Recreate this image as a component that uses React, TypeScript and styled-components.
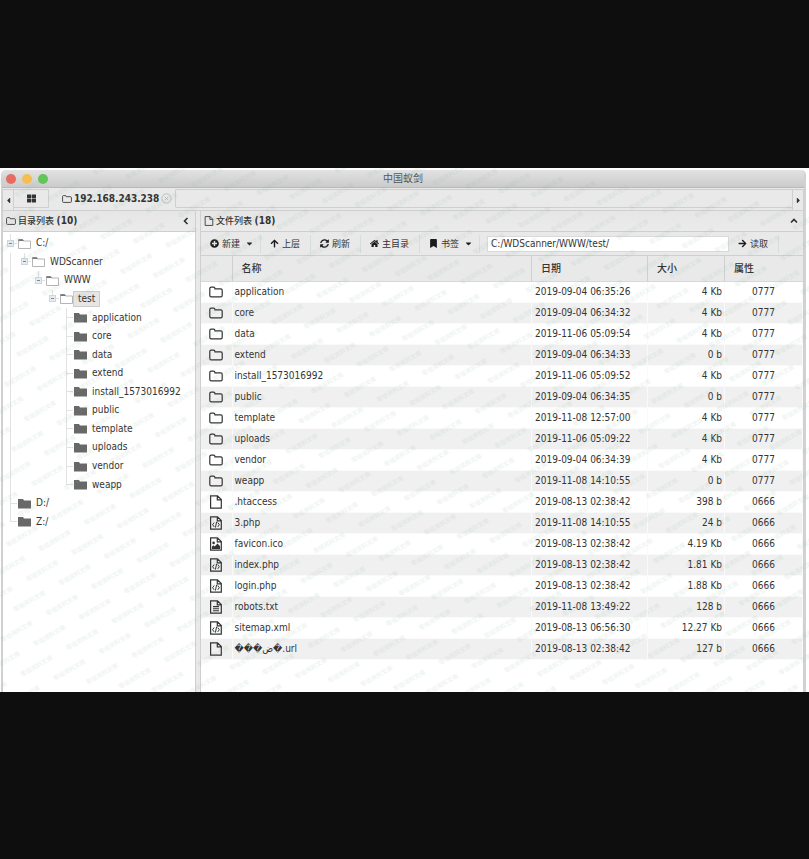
import React from 'react';
import styled, { createGlobalStyle, css } from 'styled-components';
import {
  FaArrowRight,
  FaArrowUp,
  FaBookmark,
  FaCaretDown,
  FaCaretLeft,
  FaCaretRight,
  FaHome,
  FaPlusCircle,
  FaSyncAlt,
  FaThLarge,
} from 'react-icons/fa';

const line = '#cfcfcf';
const chrome = '#e9e9e9';
const ink = '#333333';

const GlobalStyle = createGlobalStyle`
  * { box-sizing: border-box; }
  body {
    margin: 0;
    background: #0e0e0e;
    color: ${ink};
    font: 10px/14px "DejaVu Sans Condensed", "Noto Sans CJK SC", sans-serif;
  }
  button, input { font: inherit; color: inherit; }
  button { background: none; border: 0; padding: 0; }
  svg { display: block; flex: none; }
`;

const Page = styled.div`
  min-height: 100vh;
  padding: 168px 0;
`;

const Sheet = styled.div`
  position: relative;
  overflow: hidden;
  background: #fff;
  padding: 2px 3px 0 1px;
`;

const Frame = styled.div`
  display: flex;
  flex-direction: column;
  border: solid #d2d2d2;
  border-width: 0 2px 0 1px;
  border-radius: 5px 5px 0 0;
  background: ${chrome};
`;

const TitleBar = styled.header`
  display: grid;
  grid-template-columns: 1fr auto 1fr;
  align-items: center;
  height: 18px;
  padding: 0 4px;
  background: linear-gradient(#e2e2e2, #cbcbcb);
  border-bottom: 1px solid #b9b9b9;
  border-radius: 5px 5px 0 0;
`;

const Lights = styled.div`
  display: flex;
  gap: 6px;
`;

const Light = styled.button<{ $color: string }>`
  width: 10px;
  height: 10px;
  border-radius: 50%;
  background: ${p => p.$color};
`;

const Title = styled.h1`
  margin: 0;
  font-size: 10px;
  font-weight: 400;
  color: #555555;
`;

const TabBar = styled.nav`
  display: flex;
  height: 23px;
  padding-top: 1px;
  border-bottom: 1px solid ${line};
`;

const Scroll = styled.button`
  display: flex;
  align-items: center;
  justify-content: center;
  width: 12px;
  border: solid ${line};
  border-width: 1px 1px 0;
`;

const Tab = styled.div<{ $active?: boolean }>`
  display: flex;
  align-items: center;
  margin-bottom: 2px;
  border-top: 1px solid ${p => (p.$active ? chrome : line)};
  border-bottom: 1px solid ${p => (p.$active ? chrome : line)};
  border-right: 1px solid ${line};
  font-weight: 700;
  padding: 0 3px 0 13px;
  gap: 2px;
`;

const HomeTab = styled(Tab)`
  padding: 0 12px 0 13px;
`;

const TabLabel = styled.button`
  font-weight: 700;
`;

const Close = styled.button`
  color: #bdbdbd;
`;

const TabFill = styled.div`
  flex: 1;
  margin-bottom: 2px;
  border: solid ${line};
  border-width: 1px 0;
`;

const Panels = styled.main`
  display: grid;
  grid-template-columns: 194px minmax(0, 1fr);
  column-gap: 4px;
`;

const Panel = styled.section`
  display: flex;
  flex-direction: column;
  border: solid ${line};
  border-width: 0 1px;
  background: #fff;
`;

const PanelHead = styled.header`
  display: flex;
  align-items: center;
  gap: 2px;
  height: 21px;
  padding: 0 5px 0 3px;
  background: linear-gradient(#e6e6e6, #ebebeb);
  border-bottom: 1px solid ${line};
`;

const PanelTitle = styled.h2`
  flex: 1;
  margin: 0;
  font-size: 9px;
  font-weight: 500;
`;

const Count = styled.span`
  font-size: 10px;
  font-weight: 700;
`;

const Tree = styled.ul`
  display: grid;
  grid-auto-rows: 1fr;
  height: 297px;
  margin: 2px 0 0;
  padding: 0;
  list-style: none;
`;

const Node = styled.li`
  display: flex;
  align-items: stretch;
`;

type GuideKind = 'none' | 'through' | 'leaf' | 'last' | 'open';

const Guide = styled.span<{ $kind: GuideKind }>`
  display: flex;
  align-items: center;
  justify-content: center;
  width: 14px;
  ${p =>
    p.$kind === 'through' &&
    css`background: linear-gradient(#e2e2e2, #e2e2e2) 7px 0 / 1px 100% no-repeat;`}
  ${p =>
    p.$kind === 'leaf' &&
    css`background:
      linear-gradient(#e2e2e2, #e2e2e2) 7px 0 / 1px 100% no-repeat,
      linear-gradient(#e2e2e2, #e2e2e2) 100% 50% / 7px 1px no-repeat;`}
  ${p =>
    (p.$kind === 'last' || p.$kind === 'open') &&
    css`background:
      linear-gradient(#e2e2e2, #e2e2e2) 7px 0 / 1px 50% no-repeat,
      linear-gradient(#e2e2e2, #e2e2e2) 100% 50% / 7px 1px no-repeat;`}
`;

const Toggle = styled.button`
  display: flex;
  align-items: center;
  justify-content: center;
  width: 7px;
  height: 7px;
  border: 1px solid #cdd6de;
  background: #e6ecf2;

  &::after {
    content: '';
    width: 3px;
    height: 1px;
    background: #7d8790;
  }
`;

const NodeIcon = styled.span`
  display: flex;
  align-items: center;
  width: 14px;
  padding-left: 1px;
`;

const NodeLabel = styled.button<{ $selected?: boolean }>`
  align-self: center;
  height: 16px;
  line-height: 14px;
  padding: 0 4px;
  border: 1px solid ${p => (p.$selected ? '#cccccc' : 'transparent')};
  background: ${p => (p.$selected ? '#e6e6e6' : 'transparent')};
`;

const Toolbar = styled.div`
  display: flex;
  align-items: center;
  height: 24px;
  padding-right: 24px;
  background: ${chrome};
  border-bottom: 1px solid ${line};
`;

const Tool = styled.button<{ $menu?: boolean }>`
  display: flex;
  align-items: center;
  gap: 3px;
  height: 18px;
  padding: 0 ${p => (p.$menu ? 6 : 10)}px 0 9px;
  border-right: 1px solid #d6dde0;
  font-size: 9px;

  svg { color: #1c1c1c; }
`;

const Caret = styled(FaCaretDown)`
  margin-left: 2px;
`;

const PathInput = styled.input`
  flex: 1;
  min-width: 0;
  height: 16px;
  margin: 0 0 0 7px;
  padding: 0 3px;
  border: 1px solid #d9d9d9;
  background: #fff;
`;

const Files = styled.table`
  width: 100%;
  table-layout: fixed;
  border-collapse: collapse;
  margin-bottom: 32px;
`;

const HeadCell = styled.th<{ $width?: number }>`
  width: ${p => (p.$width ? `${p.$width}px` : 'auto')};
  height: 25px;
  padding: 2px 0 0 9px;
  text-align: left;
  font-weight: 500;
  background: ${chrome};
  border-right: 1px solid ${line};
  border-bottom: 1px solid #d8d8d8;

  &:last-child { border-right: 0; }
`;

const FileRow = styled.tr`
  &:nth-child(even) td { background: #f0f0f0; }
`;

const Cell = styled.td<{ $align?: 'left' | 'right' | 'center' }>`
  height: 21px;
  padding: 0 2px;
  text-align: ${p => p.$align ?? 'left'};
  border: solid #fafafa;
  border-width: 1px 1px 1px 0;
  white-space: nowrap;
`;

const DateCell = styled(Cell)`
  padding-left: 3px;
`;

const IconCell = styled(Cell)`
  padding-left: 8px;
`;

const WatermarkLayer = styled.svg`
  position: absolute;
  inset: 0;
  width: 100%;
  height: 100%;
  pointer-events: none;
  fill: #86b398;
  opacity: 0.13;
  font: 700 6px "Noto Sans CJK SC", sans-serif;
`;

const FolderOutline = ({ size = 14 }: { size?: number }) => (
  <svg width={size} height={size} viewBox="0 0 14 14" fill="none" stroke="currentColor" strokeWidth="1.2">
    <path d="M.8 3.6c0-.9.5-1.4 1.4-1.4h2.4c.8 0 1.3.5 1.3 1.3v.3h5.9c.9 0 1.4.5 1.4 1.4v5.2c0 .9-.5 1.4-1.4 1.4H2.2c-.9 0-1.4-.5-1.4-1.4z" />
  </svg>
);

const FileIcon = ({ kind, size = 14 }: { kind: string; size?: number }) => {
  if (kind === 'dir') return <FolderOutline size={size} />;
  return (
    <svg width={size} height={size} viewBox="0 0 14 14" fill="none" stroke="currentColor" strokeWidth="1.2">
      <path d="M1.6.8h6.9l3.8 3.8v8.6H1.6zM8.3.8v4h4" />
      {kind === 'code' && <path d="M5.2 6.5 3.6 8.7l1.6 2.2M8.7 6.5l1.6 2.2-1.6 2.2M7.6 5.8l-1.2 5.8" strokeWidth="1" />}
      {kind === 'text' && <path d="M4 6.6h6M4 8.7h6M4 10.8h6" strokeWidth="1.1" />}
      {kind === 'image' && (
        <g fill="currentColor" stroke="none">
          <circle cx="4.6" cy="5.9" r="1.3" />
          <path d="M2.9 12V9.8l1.6-1.5 1.2 1.1 2.8-2.9 2.6 2.7V12z" />
        </g>
      )}
    </svg>
  );
};

const TreeFolder = ({ open }: { open?: boolean }) =>
  open ? (
    <svg width="13" height="11" viewBox="0 0 13 11">
      <path d="M.5 10.5v-9h4l1 1.5h7v7.5z" fill="#fff" stroke="#b5b5b5" />
      <path d="M.5 3V1.3h4.2L6 3z" fill="#777" />
    </svg>
  ) : (
    <svg width="13" height="11" viewBox="0 0 13 11">
      <path d="M0 10.5V1h5l1 1.5h7v8z" fill="#686868" />
    </svg>
  );

const Chevron = ({ d }: { d: string }) => (
  <svg width="8" height="8" viewBox="0 0 8 8" fill="none" stroke="#2e2e2e" strokeWidth="1.6">
    <path d={d} />
  </svg>
);

type TreeNode = { name: string; guides: GuideKind[]; selected?: boolean };

const leaves = ['application', 'core', 'data', 'extend', 'install_1573016992', 'public', 'template', 'uploads', 'vendor', 'weapp'];

const tree: TreeNode[] = [
  { name: 'C:/', guides: ['open'] },
  { name: 'WDScanner', guides: ['through', 'open'] },
  { name: 'WWW', guides: ['through', 'none', 'open'] },
  { name: 'test', guides: ['through', 'none', 'none', 'open'], selected: true },
  ...leaves.map((name, i): TreeNode => ({
    name,
    guides: ['through', 'none', 'none', 'none', i === leaves.length - 1 ? 'last' : 'leaf'],
  })),
  { name: 'D:/', guides: ['leaf'] },
  { name: 'Z:/', guides: ['last'] },
];

const files: [string, string, string, string, string][] = [
  ['dir', 'application', '2019-09-04 06:35:26', '4 Kb', '0777'],
  ['dir', 'core', '2019-09-04 06:34:32', '4 Kb', '0777'],
  ['dir', 'data', '2019-11-06 05:09:54', '4 Kb', '0777'],
  ['dir', 'extend', '2019-09-04 06:34:33', '0 b', '0777'],
  ['dir', 'install_1573016992', '2019-11-06 05:09:52', '4 Kb', '0777'],
  ['dir', 'public', '2019-09-04 06:34:35', '0 b', '0777'],
  ['dir', 'template', '2019-11-08 12:57:00', '4 Kb', '0777'],
  ['dir', 'uploads', '2019-11-06 05:09:22', '4 Kb', '0777'],
  ['dir', 'vendor', '2019-09-04 06:34:39', '4 Kb', '0777'],
  ['dir', 'weapp', '2019-11-08 14:10:55', '0 b', '0777'],
  ['file', '.htaccess', '2019-08-13 02:38:42', '398 b', '0666'],
  ['code', '3.php', '2019-11-08 14:10:55', '24 b', '0666'],
  ['image', 'favicon.ico', '2019-08-13 02:38:42', '4.19 Kb', '0666'],
  ['code', 'index.php', '2019-08-13 02:38:42', '1.81 Kb', '0666'],
  ['code', 'login.php', '2019-08-13 02:38:42', '1.88 Kb', '0666'],
  ['text', 'robots.txt', '2019-11-08 13:49:22', '128 b', '0666'],
  ['code', 'sitemap.xml', '2019-08-13 06:56:30', '12.27 Kb', '0666'],
  ['file', '\uFFFD\uFFFD\uFFFD\u0636\uFFFD.url', '2019-08-13 02:38:42', '127 b', '0666'],
];

/* Slanted lattice of repeated marks laid over the whole window. */
const Watermark = () => {
  const marks: React.ReactNode[] = [];
  for (let row = -14; row <= 5; row++) {
    for (let col = -8; col <= 32; col++) {
      const x = 42 + col * 32.73 - row * 12.7;
      const y = 403 + col * 4.07 + row * 30.3;
      if (x < -12 || x > 820 || y < -6 || y > 530) continue;
      marks.push(
        <text key={`${row}:${col}`} transform={`translate(${x} ${y}) rotate(-30)`} textAnchor="middle" dy="2">
          零组资料文库
        </text>,
      );
    }
  }
  return <WatermarkLayer aria-hidden="true">{marks}</WatermarkLayer>;
};

export default function App() {
  return (
    <Page>
      <GlobalStyle />
      <Sheet>
        <Frame>
          <TitleBar>
            <Lights>
              <Light $color="#ec695f" aria-label="关闭" />
              <Light $color="#f4bf50" aria-label="最小化" />
              <Light $color="#62c655" aria-label="最大化" />
            </Lights>
            <Title>中国蚁剑</Title>
          </TitleBar>
          <TabBar>
            <Scroll aria-label="向左滚动"><FaCaretLeft size={9} /></Scroll>
            <HomeTab as="button" aria-label="主页"><FaThLarge size={9} /></HomeTab>
            <Tab $active>
              <FolderOutline size={10} />
              <TabLabel>192.168.243.238</TabLabel>
              <Close aria-label="关闭标签">
                <svg width="11" height="11" viewBox="0 0 11 11" fill="none" stroke="currentColor">
                  <circle cx="5.5" cy="5.5" r="4.7" />
                  <path d="m3.7 3.7 3.6 3.6m0-3.6L3.7 7.3" />
                </svg>
              </Close>
            </Tab>
            <TabFill />
            <Scroll aria-label="向右滚动"><FaCaretRight size={9} /></Scroll>
          </TabBar>
          <Panels>
            <Panel>
              <PanelHead>
                <FolderOutline size={10} />
                <PanelTitle>目录列表 <Count>(10)</Count></PanelTitle>
                <button aria-label="折叠目录"><Chevron d="M5.5 1 2.5 4l3 3" /></button>
              </PanelHead>
              <Tree>
                {tree.map(node => {
                  const own = node.guides[node.guides.length - 1];
                  return (
                    <Node key={node.name}>
                      {node.guides.map((kind, i) => (
                        <Guide key={i} $kind={kind}>
                          {kind === 'open' && <Toggle aria-label={`折叠 ${node.name}`} />}
                        </Guide>
                      ))}
                      <NodeIcon><TreeFolder open={own === 'open'} /></NodeIcon>
                      <NodeLabel $selected={node.selected}>{node.name}</NodeLabel>
                    </Node>
                  );
                })}
              </Tree>
            </Panel>
            <Panel>
              <PanelHead>
                <FileIcon kind="file" size={10} />
                <PanelTitle>文件列表 <Count>(18)</Count></PanelTitle>
                <button aria-label="折叠列表"><Chevron d="M1 5.5l3-3 3 3" /></button>
              </PanelHead>
              <Toolbar>
                <Tool $menu><FaPlusCircle size={9} />新建<Caret size={9} /></Tool>
                <Tool><FaArrowUp size={9} />上层</Tool>
                <Tool><FaSyncAlt size={9} />刷新</Tool>
                <Tool><FaHome size={9} />主目录</Tool>
                <Tool $menu><FaBookmark size={9} />书签<Caret size={9} /></Tool>
                <PathInput aria-label="路径" defaultValue="C:/WDScanner/WWW/test/" />
                <Tool><FaArrowRight size={9} />读取</Tool>
              </Toolbar>
              <Files>
                <thead>
                  <tr>
                    <HeadCell $width={31} aria-label="类型" />
                    <HeadCell>名称</HeadCell>
                    <HeadCell $width={116}>日期</HeadCell>
                    <HeadCell $width={77}>大小</HeadCell>
                    <HeadCell $width={78}>属性</HeadCell>
                  </tr>
                </thead>
                <tbody>
                  {files.map(([kind, name, date, size, mode]) => (
                    <FileRow key={name}>
                      <IconCell><FileIcon kind={kind} /></IconCell>
                      <Cell>{name}</Cell>
                      <DateCell>{date}</DateCell>
                      <Cell $align="right">{size}</Cell>
                      <Cell $align="center">{mode}</Cell>
                    </FileRow>
                  ))}
                </tbody>
              </Files>
            </Panel>
          </Panels>
        </Frame>
        <Watermark />
      </Sheet>
    </Page>
  );
}
